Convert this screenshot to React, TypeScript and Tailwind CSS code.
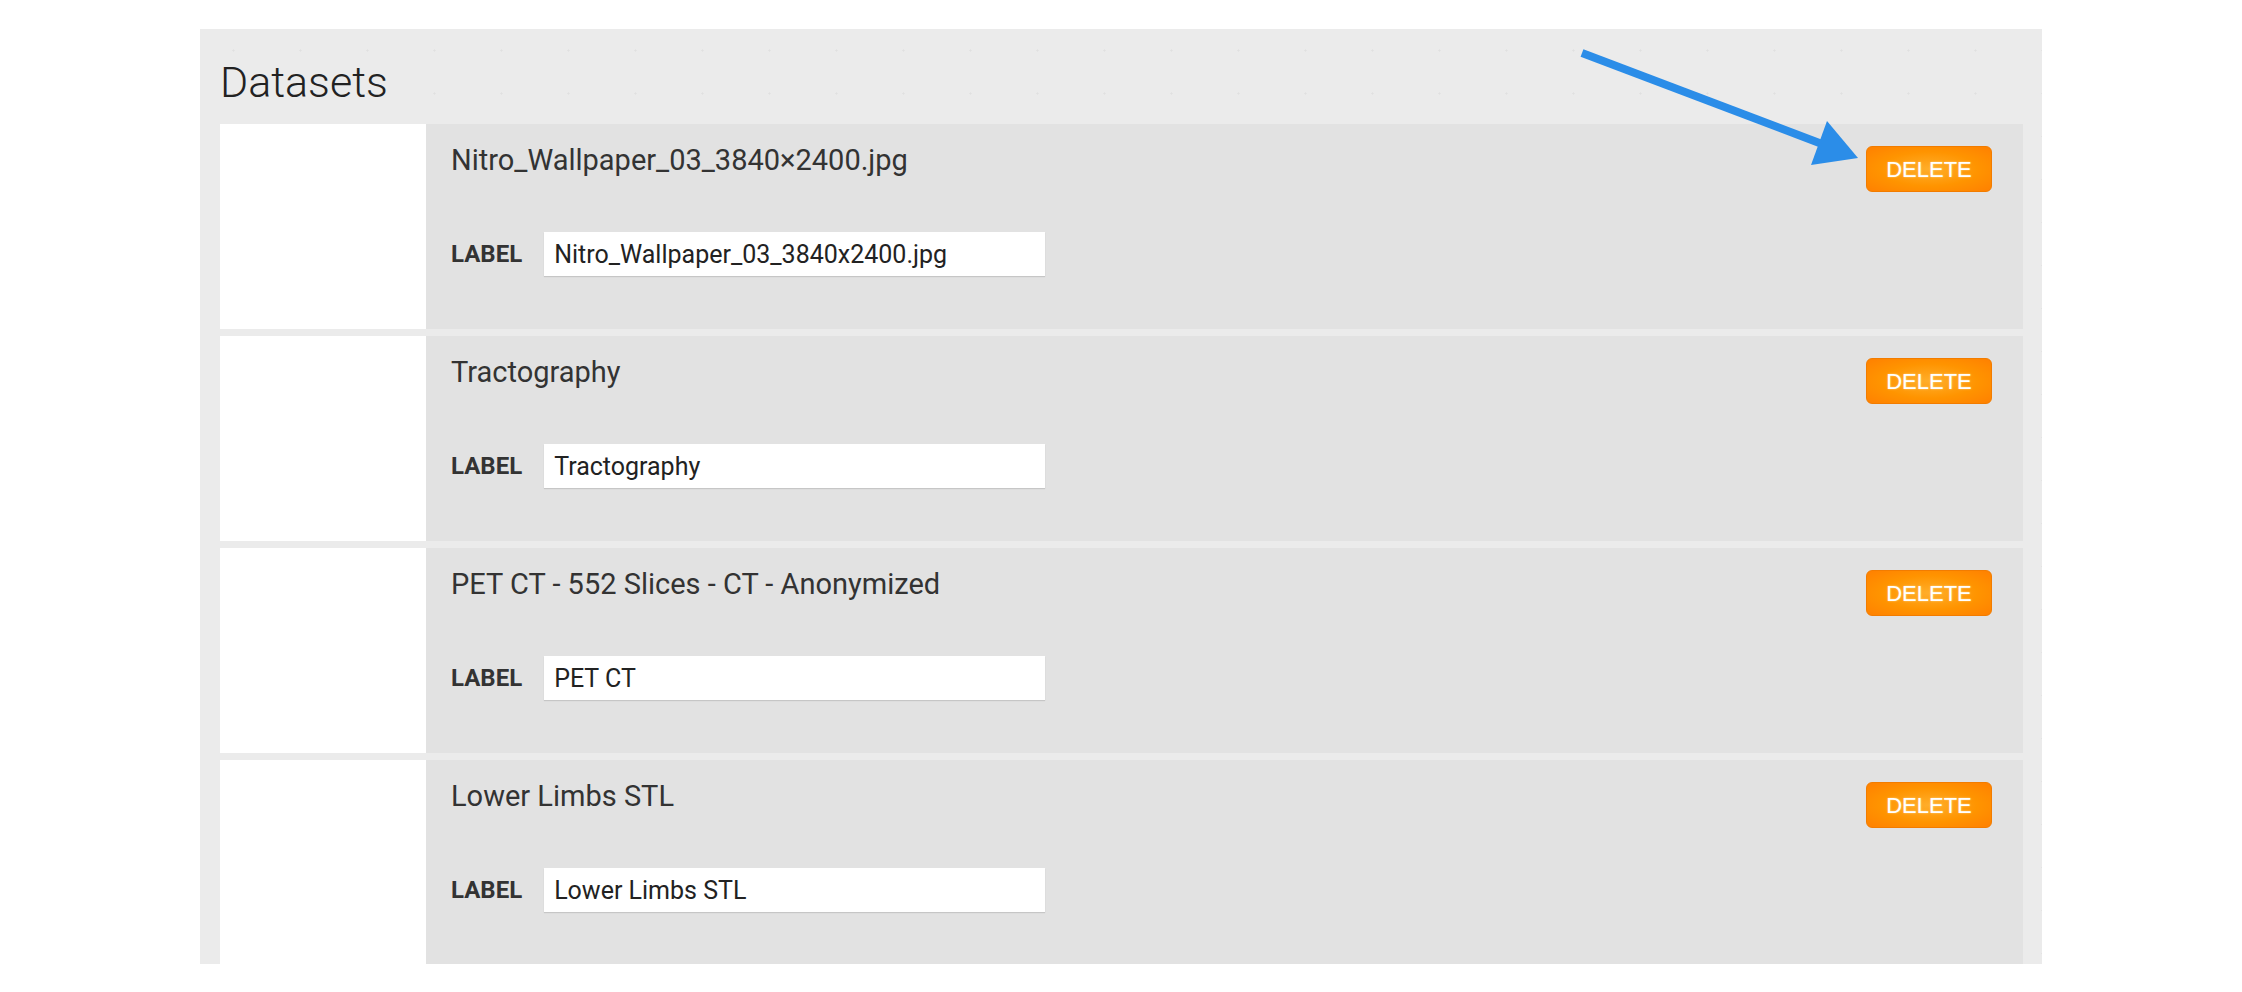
import React from "react";

const rows = [
  { title: "Nitro_Wallpaper_03_3840×2400.jpg", label: "Nitro_Wallpaper_03_3840x2400.jpg" },
  { title: "Tractography", label: "Tractography" },
  { title: "PET CT - 552 Slices - CT - Anonymized", label: "PET CT" },
  { title: "Lower Limbs STL", label: "Lower Limbs STL" },
];

function Row({ title, label }: { title: string; label: string }) {
  return (
    <div className="flex h-[205px] shrink-0">
      <div className="w-[206px] shrink-0 bg-white" />
      <div className="flex flex-1 justify-between bg-[#e2e2e2] pl-[25px] pr-[31px]">
        <div className="flex flex-col pt-[19px]">
          <div className="text-[29px] leading-[34px] text-[#333] font-['Roboto',sans-serif]">{title}</div>
          <div className="mt-[55px] flex items-center">
            <span className="mr-[22px] text-[24px] font-bold text-[#333] font-['Roboto',sans-serif]">LABEL</span>
            <input
              readOnly
              value={label}
              className="h-[44px] w-[501px] bg-white pl-[10px] text-[25px] text-[#222] outline-none shadow-[0_1px_1px_rgba(0,0,0,0.12)] font-['Roboto',sans-serif]"
            />
          </div>
        </div>
        <div className="pt-[22px]">
          <button className="h-[46px] w-[126px] rounded-[6px] border border-[#f27c00] bg-[radial-gradient(ellipse_at_center,#ffae2a_0%,#ff9400_55%,#ff8000_100%)] text-[22px] text-white [text-shadow:0_0_2px_rgba(255,220,150,0.9)] font-['Liberation_Sans',Arial,sans-serif]">
            DELETE
          </button>
        </div>
      </div>
    </div>
  );
}

export default function App() {
  return (
    <div className="relative h-[992px] w-[2242px] overflow-hidden bg-white pl-[200px] pt-[29px]">
      <div className="flex h-[935px] w-[1842px] flex-col overflow-hidden bg-[#ebebeb] pl-[20px] pr-[19px] bg-[radial-gradient(circle,#e0e0e0_0.8px,transparent_1.4px)] bg-[length:67px_43px]">
        <div className="pb-[20px] pt-[32px] text-[43px] font-light leading-[43px] text-[#222] font-['Roboto',sans-serif]">
          Datasets
        </div>
        <div className="flex flex-col gap-[7px]">
          {rows.map((r) => (
            <Row key={r.title} title={r.title} label={r.label} />
          ))}
        </div>
      </div>
      <svg className="pointer-events-none absolute left-0 top-0" width="2242" height="992">
        <line x1="1582" y1="53" x2="1822" y2="144" stroke="#2b8de8" strokeWidth="8" />
        <polygon points="1858,158 1827,121 1811,165" fill="#2b8de8" />
      </svg>
    </div>
  );
}
